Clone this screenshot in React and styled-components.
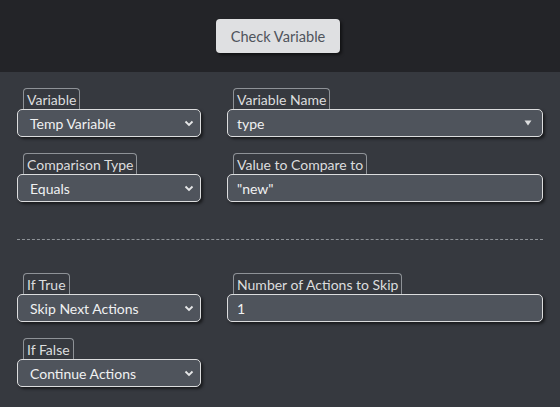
import React from 'react'
import styled, { createGlobalStyle } from 'styled-components'

const GlobalStyle = createGlobalStyle`
    html, body {
        margin: 0;
        padding: 0;
        background: #36393f;
    }
    body {
        font-family: Lato, "Noto Sans", sans-serif;
    }
`

const Header = styled.div`
    height: 72px;
    background: #232428;
    display: flex;
    justify-content: center;
    align-items: flex-start;
    padding-top: 19px;
    box-sizing: border-box;
`

const HeaderButton = styled.button`
    width: 124px;
    height: 34px;
    margin-right: 4px;
    background: #dfe0e2;
    color: #4f545c;
    border: none;
    border-radius: 4px;
    font-family: Lato, sans-serif;
    font-size: 14.6px;
    box-shadow: 2px 2px 3px rgba(0, 0, 0, 0.5);
    padding: 0;
`

const Panel = styled.div`
    padding: 16px 17px 20px 17px;
`

const Row = styled.div`
    display: grid;
    grid-template-columns: 184px 316px;
    column-gap: 26px;
    margin-bottom: ${p => p.gap || 0}px;
`

const Field = styled.div`
    display: flex;
    flex-direction: column;
    align-items: flex-start;
`

const Tab = styled.div`
    margin-left: 6px;
    height: 21px;
    box-sizing: border-box;
    padding: 1px 3px 0 3px;
    border: 1px solid #8e9297;
    border-bottom: none;
    border-radius: 4px 4px 0 0;
    color: #dcddde;
    font-size: 14px;
    line-height: 19px;
    background: #36393f;
`

const Box = styled.div`
    width: 100%;
    height: 28px;
    box-sizing: border-box;
    display: flex;
    align-items: center;
    justify-content: space-between;
    padding: 0 ${p => (p.select ? 6 : 10)}px 0 ${p => (p.select ? 12 : 9)}px;
    background: #4f545c;
    border: 1px solid #dcddde;
    border-radius: 5px;
    box-shadow: 2px 2px 3px rgba(0, 0, 0, 0.55);
    color: #f0f1f2;
    font-size: 14px;
`

const Separator = styled.div`
    border-top: 1px dashed #8e9297;
    margin: 37px 0 33px 0;
`

const Chevron = () => (
    <svg width="10" height="7" viewBox="0 0 10 7">
        <path d="M1.5 1.5 L5 5 L8.5 1.5" fill="none" stroke="#e6e7e8" strokeWidth="1.8" />
    </svg>
)

const Triangle = () => (
    <svg width="8" height="6" viewBox="0 0 8 6">
        <path d="M0.5 0.5 L7.5 0.5 L4 5.5 Z" fill="#dcddde" />
    </svg>
)

const SelectField = ({ label, value }) => (
    <Field>
        <Tab>{label}</Tab>
        <Box select>
            <span>{value}</span>
            <Chevron />
        </Box>
    </Field>
)

const InputField = ({ label, value, list }) => (
    <Field>
        <Tab>{label}</Tab>
        <Box>
            <span>{value}</span>
            {list && <Triangle />}
        </Box>
    </Field>
)

export default function App() {
    return (
        <>
            <GlobalStyle />
            <Header>
                <HeaderButton>Check Variable</HeaderButton>
            </Header>
            <Panel>
                <Row gap={16}>
                    <SelectField label="Variable" value="Temp Variable" />
                    <InputField label="Variable Name" value="type" list />
                </Row>
                <Row>
                    <SelectField label="Comparison Type" value="Equals" />
                    <InputField label="Value to Compare to" value={'"new"'} />
                </Row>
                <Separator />
                <Row gap={16}>
                    <SelectField label="If True" value="Skip Next Actions" />
                    <InputField label="Number of Actions to Skip" value="1" />
                </Row>
                <Row>
                    <SelectField label="If False" value="Continue Actions" />
                </Row>
            </Panel>
        </>
    )
}
